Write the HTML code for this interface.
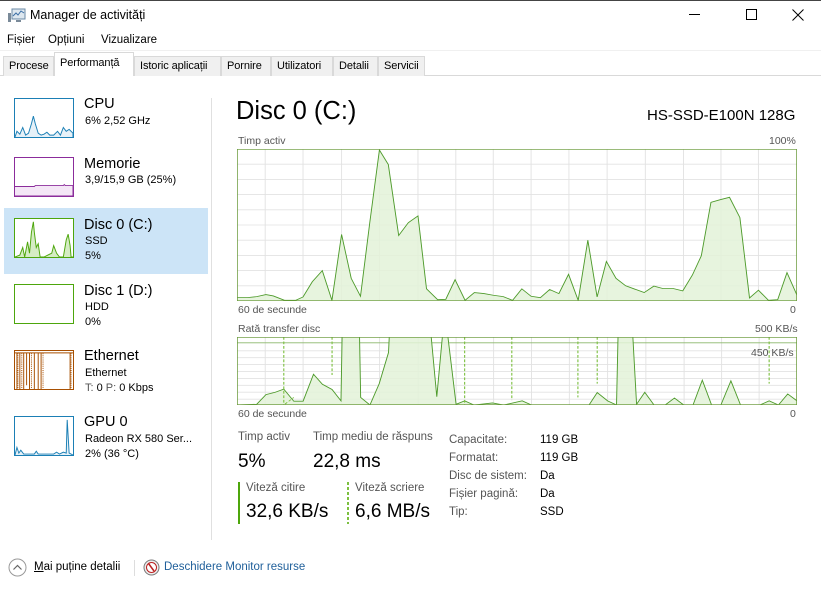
<!DOCTYPE html>
<html><head><meta charset="utf-8">
<style>
*{margin:0;padding:0;box-sizing:border-box}
body{width:821px;height:590px;background:#fff;font-family:"Liberation Sans",sans-serif;color:#000;position:relative;overflow:hidden;font-size:12px}
.a{position:absolute;white-space:nowrap}
.tab{position:absolute;top:56px;height:20px;background:#f0f0f0;border:1px solid #d9d9d9;border-bottom:none;font-size:11px;padding:3px 0 0 5px;letter-spacing:-0.1px}
.g{color:#555}
.side .t{font-size:14.5px}
.side .s{font-size:11px}
.thumb{position:absolute;left:14px;width:60px;height:40px;border:1px solid}
</style></head><body>
<div style="position:absolute;left:0;top:0;width:821px;height:1px;background:#444"></div>
<svg class="a" style="left:8px;top:8px" width="18" height="15" viewBox="0 0 18 15"><rect x="4" y="1" width="13" height="10" fill="#dde7ef" stroke="#6a8aa5"/><polyline points="5,8 8,5 10,7 13,3 16,5" fill="none" stroke="#3a6ea5"/><rect x="0" y="5" width="3" height="9" fill="#7a8a99"/><rect x="8" y="12" width="5" height="2" fill="#7a8a99"/></svg>
<div class="a" style="left:30px;top:8px;font-size:12.5px">Manager de activități</div>
<div class="a" style="left:689px;top:14px;width:11px;height:1px;background:#000"></div>
<div class="a" style="left:746px;top:9px;width:11px;height:11px;border:1px solid #000"></div>
<svg class="a" style="left:792px;top:9px" width="12" height="12"><path d="M0.5 0.5L11.5 11.5M11.5 0.5L0.5 11.5" stroke="#000"/></svg>
<div class="a" style="left:7px;top:34px;font-size:11.5px">Fișier</div>
<div class="a" style="left:48px;top:34px;font-size:11.5px">Opțiuni</div>
<div class="a" style="left:101px;top:34px;font-size:11.5px">Vizualizare</div>
<div class="a" style="left:0;top:50px;width:821px;height:1px;background:#f0f0f0"></div>
<div class="a" style="left:0;top:75px;width:821px;height:1px;background:#d9d9d9"></div>
<div class="tab" style="left:3px;width:51px">Procese</div>
<div class="tab" style="left:54px;top:52px;height:24px;width:80px;background:#fff;padding-top:4px;z-index:2;border-color:#d9d9d9">Performanță</div>
<div class="tab" style="left:134px;width:87px">Istoric aplicații</div>
<div class="tab" style="left:221px;width:50px">Pornire</div>
<div class="tab" style="left:271px;width:62px">Utilizatori</div>
<div class="tab" style="left:333px;width:45px">Detalii</div>
<div class="tab" style="left:378px;width:47px">Servicii</div>

<div class="side">
<div class="a" style="left:4px;top:208px;width:204px;height:66px;background:#cce4f7"></div>
<svg class="thumb" style="top:98px;border-color:#1b7fb5" viewBox="0 0 60 40" preserveAspectRatio="none"><polyline points="0,40 2,34 5,37 8,30 11,38 14,36 17,26 19,18 21,26 24,36 27,38 30,37 33,35 36,38 40,38 44,34 47,38 50,30 53,34 56,32 60,36 60,40" fill="#e6f1f8" stroke="#1b7fb5" stroke-width="1"/></svg>
<div class="a t" style="left:84px;top:96px">CPU</div><div class="a s" style="left:85px;top:115px">6% 2,52 GHz</div>
<svg class="thumb" style="top:157px;border-color:#8b2c9b" viewBox="0 0 60 40" preserveAspectRatio="none"><polyline points="0,30 20,30 21,29 40,29 50,29 51,28 52,29 60,29 60,40 0,40" fill="#f4e6f6" stroke="#8b2c9b"/></svg>
<div class="a t" style="left:84px;top:156px">Memorie</div><div class="a s" style="left:85px;top:174px">3,9/15,9 GB (25%)</div>
<svg class="thumb" style="top:218px;border-color:#4da60c;background:#fff" viewBox="0 0 60 40" preserveAspectRatio="none"><polyline points="0,40 5,38 8,30 10,40 13,24 15,36 17,14 19,3 20,14 22,30 24,26 26,40 30,40 34,38 38,36 40,28 43,36 46,40 50,40 53,22 55,16 57,28 58,40 60,40" fill="#d5ecc4" stroke="#4da60c"/></svg>
<div class="a t" style="left:84px;top:217px">Disc 0 (C:)</div><div class="a s" style="left:85px;top:235px">SSD</div><div class="a s" style="left:85px;top:250px">5%</div>
<div class="thumb" style="top:284px;border-color:#4da60c"></div>
<div class="a t" style="left:84px;top:283px">Disc 1 (D:)</div><div class="a s" style="left:85px;top:301px">HDD</div><div class="a s" style="left:85px;top:316px">0%</div>
<svg class="thumb" style="top:350px;border-color:#a74f01" viewBox="0 0 60 40" preserveAspectRatio="none"><g stroke="#a74f01" fill="none"><path d="M2 2V40M5 2V40M9 2V40M12 2V36M15 2V40M20 2V40M24 2V40M27 2V40M57 2V40"/><path d="M0 2H60" /></g><path d="M3 2V40M7 2V40M17 2V40M29 2V40M58 2V40" stroke="#a74f01" stroke-dasharray="1 1"/></svg>
<div class="a t" style="left:84px;top:348px">Ethernet</div><div class="a s" style="left:85px;top:367px">Ethernet</div><div class="a s" style="left:85px;top:382px"><span class="g">T:</span> 0 <span class="g">P:</span> 0 Kbps</div>
<svg class="thumb" style="top:416px;border-color:#1b7fb5" viewBox="0 0 60 40" preserveAspectRatio="none"><polyline points="0,40 2,32 4,38 6,35 9,39 20,39 22,36 24,39 40,39 43,37 46,39 50,37 53,38 54,3 56,38 60,40" fill="#e6f1f8" stroke="#1b7fb5"/></svg>
<div class="a t" style="left:84px;top:414px">GPU 0</div><div class="a s" style="left:85px;top:433px">Radeon RX 580 Ser...</div><div class="a s" style="left:85px;top:448px">2% (36 °C)</div>
</div>
<div class="a" style="left:211px;top:98px;width:1px;height:442px;background:#e0e0e0"></div>

<div class="a" style="left:236px;top:97px;font-size:25.5px">Disc 0 (C:)</div>
<div class="a" style="left:647px;top:107px;font-size:15px">HS-SSD-E100N 128G</div>
<div class="a g" style="left:238px;top:135px;font-size:10.5px">Timp activ</div>
<div class="a g" style="left:769px;top:135px;font-size:10.5px">100%</div>
<svg class="a" style="left:237px;top:149px" width="560" height="152" viewBox="22 62 1510 450" preserveAspectRatio="none">
<g stroke="#e2e2e2" stroke-width="2.5">
<path d="M98 62V512M200 62V512M304 62V512M406 62V512M510 62V512M612 62V512M713 62V512M815 62V512M917 62V512M1020 62V512M1123 62V512M1226 62V512M1327 62V512M1428 62V512"/>
<path d="M22 107H1532M22 152H1532M22 197H1532M22 242H1532M22 287H1532M22 332H1532M22 377H1532M22 422H1532M22 467H1532"/>
</g>
<polygon fill="#e3f2d8" fill-opacity="0.85" stroke="#4d9a2a" stroke-width="2.5" points="22,512 22,502 50,502 75,499 100,493 120,497 150,510 180,510 200,500 225,455 252,422 278,510 304,315 330,445 355,498 380,280 406,65 430,108 458,318 484,280 510,260 533,476 563,508 585,507 610,449 637,510 662,487 688,490 713,495 740,499 765,510 790,476 815,498 840,502 865,478 890,490 916,433 942,510 968,332 993,500 1018,395 1044,445 1070,467 1095,477 1120,487 1146,468 1170,475 1198,475 1224,482 1250,435 1274,378 1300,220 1325,212 1350,205 1378,265 1404,503 1428,480 1455,510 1480,508 1505,428 1532,495 1532,512"/>
<rect x="22" y="62" width="1510" height="450" fill="none" stroke="#6a9a3a" stroke-width="4"/>
</svg>
<div class="a g" style="left:238px;top:304px;font-size:10.5px">60 de secunde</div>
<div class="a g" style="left:790px;top:304px;font-size:10.5px">0</div>

<div class="a g" style="left:238px;top:323px;font-size:10.5px">Rată transfer disc</div>
<div class="a g" style="left:755px;top:323px;font-size:10.5px">500 KB/s</div>
<svg class="a" style="left:237px;top:337px" width="560" height="68" viewBox="22 55 1508 197" preserveAspectRatio="none">
<g stroke="#e2e2e2" stroke-width="2.5">
<path d="M98 55V252M200 55V252M304 55V252M406 55V252M510 55V252M612 55V252M713 55V252M815 55V252M917 55V252M1020 55V252M1123 55V252M1226 55V252M1327 55V252M1428 55V252"/>
<path d="M22 95H1530M22 115H1530M22 135H1530M22 155H1530M22 175H1530M22 195H1530M22 215H1530M22 235H1530"/>
</g>
<path d="M22 72H1530" stroke="#8bb86a" stroke-width="2.5"/>
<polygon fill="#e3f2d8" fill-opacity="0.85" stroke="#4d9a2a" stroke-width="2.5" points="22,252 75,250 100,222 125,215 148,206 175,241 200,241 228,163 252,192 278,207 302,240 305,55 352,55 355,230 380,252 405,190 430,100 432,55 545,55 560,228 575,55 590,55 612,250 635,240 660,252 710,246 740,252 790,240 815,252 970,252 992,216 1020,240 1044,252 1048,55 1088,55 1098,250 1120,215 1145,252 1175,252 1200,232 1225,252 1250,252 1275,180 1300,252 1325,252 1352,182 1378,252 1430,252 1455,240 1480,252 1505,220 1530,240 1530,252"/>
<g stroke="#7cc040" stroke-width="3" stroke-dasharray="8 5">
<path d="M148 55V252M278 55V165M635 55V252M762 55V238M940 55V230M992 55V190M1455 55V190"/>
</g>
<path d="M22 252L148 252L175 230" stroke="#7cc040" stroke-width="2.5" stroke-dasharray="8 5" fill="none"/>
<rect x="22" y="55" width="1508" height="197" fill="none" stroke="#6a9a3a" stroke-width="4"/>
</svg>
<div class="a g" style="left:751px;top:347px;font-size:10.5px">450 KB/s</div>
<div class="a g" style="left:238px;top:408px;font-size:10.5px">60 de secunde</div>
<div class="a g" style="left:790px;top:408px;font-size:10.5px">0</div>

<div class="a g" style="left:238px;top:431px;font-size:11.5px">Timp activ</div>
<div class="a" style="left:238px;top:451px;font-size:19px">5%</div>
<div class="a g" style="left:313px;top:431px;font-size:11.5px">Timp mediu de răspuns</div>
<div class="a" style="left:313px;top:451px;font-size:19px">22,8 ms</div>
<div class="a" style="left:238px;top:482px;width:2px;height:42px;background:#4da60c"></div>
<div class="a g" style="left:246px;top:482px;font-size:11.5px">Viteză citire</div>
<div class="a" style="left:246px;top:501px;font-size:19px">32,6 KB/s</div>
<div class="a" style="left:347px;top:482px;width:2px;height:42px;background:repeating-linear-gradient(#7cc040 0 3px,transparent 3px 5px)"></div>
<div class="a g" style="left:355px;top:482px;font-size:11.5px">Viteză scriere</div>
<div class="a" style="left:355px;top:501px;font-size:19px">6,6 MB/s</div>
<div class="a g" style="left:449px;top:431px;font-size:11.5px;line-height:18px">Capacitate:<br>Formatat:<br>Disc de sistem:<br>Fișier pagină:<br>Tip:</div>
<div class="a" style="left:540px;top:431px;font-size:11.5px;line-height:18px">119 GB<br>119 GB<br>Da<br>Da<br>SSD</div>

<svg class="a" style="left:8px;top:558px" width="19" height="19"><circle cx="9.5" cy="9.5" r="8.5" fill="none" stroke="#999"/><path d="M5.5 11.5L9.5 7.5L13.5 11.5" fill="none" stroke="#666" stroke-width="1.2"/></svg>
<div class="a" style="left:34px;top:561px;font-size:11.5px"><u>M</u>ai puține detalii</div>
<div class="a" style="left:134px;top:560px;width:1px;height:16px;background:#ddd"></div>
<svg class="a" style="left:143px;top:559px" width="17" height="17"><circle cx="8.5" cy="8.5" r="7.5" fill="#eee" stroke="#777"/><circle cx="8.5" cy="8.5" r="5" fill="#fff" stroke="#b22"/><path d="M5.5 4.5L11 12" stroke="#b22" stroke-width="1.5"/></svg>
<div class="a" style="left:164px;top:561px;font-size:11.5px;color:#1f5f9a">Deschidere Monitor resurse</div>
</body></html>
